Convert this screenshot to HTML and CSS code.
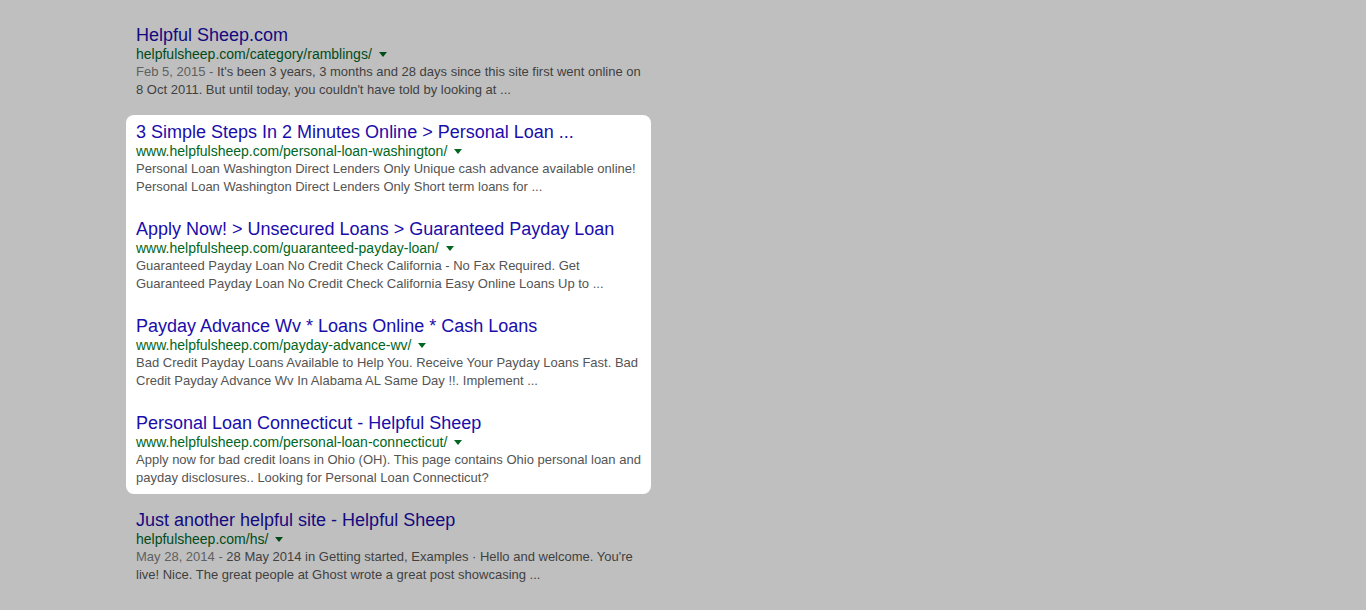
FILE: index.html
```html
<!DOCTYPE html>
<html>
<head>
<meta charset="utf-8">
<link rel="stylesheet" href="styles.css">
</head>
<body>
<div class="results">
  <div class="result dim">
    <h3 class="title"><a href="#">Helpful Sheep.com</a></h3>
    <div class="url">helpfulsheep.com/category/ramblings/<span class="arrow"></span></div>
    <div class="snippet"><span class="date">Feb 5, 2015 - </span>It's been 3 years, 3 months and 28 days since this site first went online on 8 Oct 2011. But until today, you couldn't have told by looking at ...</div>
  </div>
  <div class="highlight">
    <div class="result">
      <h3 class="title"><a href="#">3 Simple Steps In 2 Minutes Online &gt; Personal Loan ...</a></h3>
      <div class="url">www.helpfulsheep.com/personal-loan-washington/<span class="arrow"></span></div>
      <div class="snippet">Personal Loan Washington Direct Lenders Only Unique cash advance available online! Personal Loan Washington Direct Lenders Only Short term loans for ...</div>
    </div>
    <div class="result">
      <h3 class="title"><a href="#">Apply Now! &gt; Unsecured Loans &gt; Guaranteed Payday Loan</a></h3>
      <div class="url">www.helpfulsheep.com/guaranteed-payday-loan/<span class="arrow"></span></div>
      <div class="snippet">Guaranteed Payday Loan No Credit Check California - No Fax Required. Get Guaranteed Payday Loan No Credit Check California Easy Online Loans Up to ...</div>
    </div>
    <div class="result">
      <h3 class="title"><a href="#">Payday Advance Wv * Loans Online * Cash Loans</a></h3>
      <div class="url">www.helpfulsheep.com/payday-advance-wv/<span class="arrow"></span></div>
      <div class="snippet">Bad Credit Payday Loans Available to Help You. Receive Your Payday Loans Fast. Bad Credit Payday Advance Wv In Alabama AL Same Day !!. Implement ...</div>
    </div>
    <div class="result">
      <h3 class="title"><a href="#">Personal Loan Connecticut - Helpful Sheep</a></h3>
      <div class="url">www.helpfulsheep.com/personal-loan-connecticut/<span class="arrow"></span></div>
      <div class="snippet">Apply now for bad credit loans in Ohio (OH). This page contains Ohio personal loan and payday disclosures.. Looking for Personal Loan Connecticut?</div>
    </div>
  </div>
  <div class="result dim">
    <h3 class="title"><a href="#">Just another helpful site - Helpful Sheep</a></h3>
    <div class="url">helpfulsheep.com/hs/<span class="arrow"></span></div>
    <div class="snippet"><span class="date">May 28, 2014 - </span>28 May 2014 in Getting started, Examples · Hello and welcome. You're live! Nice. The great people at Ghost wrote a great post showcasing ...</div>
  </div>
</div>
</body>
</html>
```

FILE: styles.css
```css
html, body {
  margin: 0;
  padding: 0;
}
body {
  background: #bfbfbf;
  font-family: "Liberation Sans", Arial, sans-serif;
  height: 610px;
  overflow: hidden;
}
.results {
  width: 512px;
  margin-left: 136px;
  padding-top: 25px;
}
.result {
  margin-bottom: 23px;
}
.title {
  margin: 0;
  font-size: 18px;
  font-weight: normal;
  line-height: 20px;
  white-space: nowrap;
}
.title a {
  color: #1a0dab;
  text-decoration: none;
}
.url {
  font-size: 14px;
  line-height: 18px;
  color: #006621;
  white-space: nowrap;
}
.arrow {
  display: inline-block;
  margin-left: 7px;
  vertical-align: middle;
  width: 0;
  height: 0;
  border-left: 4px solid transparent;
  border-right: 4px solid transparent;
  border-top: 5px solid #006621;
  margin-top: -2px;
}
.snippet {
  font-size: 13px;
  line-height: 18px;
  color: #545454;
}
.date {
  color: #808080;
}
.highlight {
  background: #ffffff;
  border-radius: 8px;
  margin: -7px 0 16px -10px;
  padding: 7px 3px 7px 10px;
  width: 512px;
}
.highlight .result:last-child {
  margin-bottom: 0;
}
.dim .title a { color: #140a80; }
.dim .url { color: #004c19; }
.dim .arrow { border-top-color: #004c19; }
.dim .snippet { color: #3f3f3f; }
.dim .date { color: #606060; }
```
